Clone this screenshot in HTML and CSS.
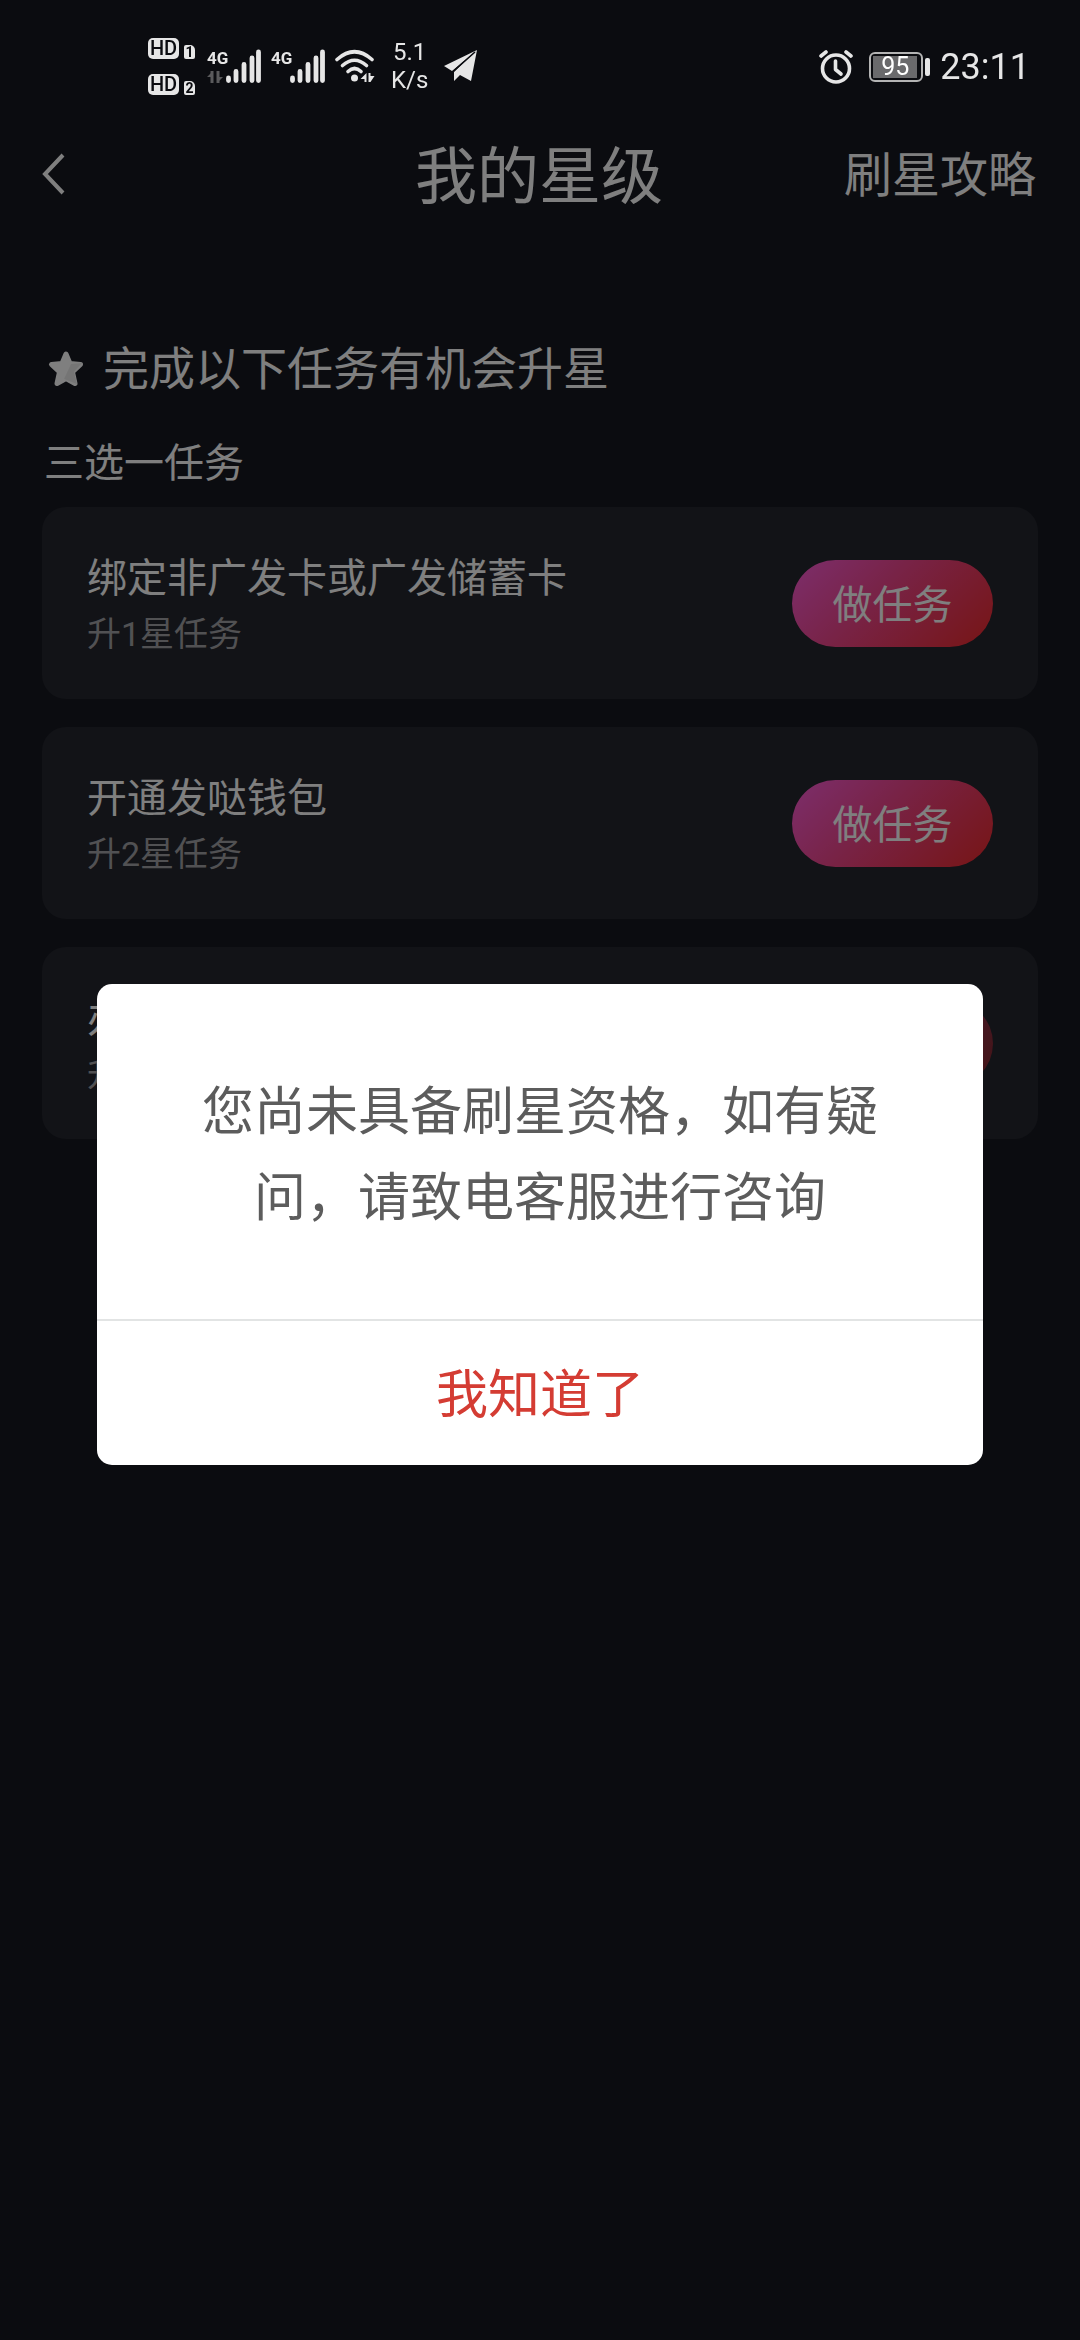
FILE: index.html
```html
<!DOCTYPE html>
<html lang="zh-CN">
<head>
<meta charset="utf-8">
<meta name="viewport" content="width=device-width">
<title>我的星级</title>
<link rel="stylesheet" href="styles.css">
</head>
<body>
<div class="status">
  <div class="status-group">
    <div class="hd-stack">
      <div class="hd-row"><span class="hd">HD</span><span class="sim">1</span></div>
      <div class="hd-row"><span class="hd">HD</span><span class="sim">2</span></div>
    </div>
    <div class="signal">
      <div class="net"><span>4G</span>
        <svg width="16" height="12" viewBox="0 0 16 12"><path d="M5 0v12M11 0v12" stroke="#5a5a5c" stroke-width="3"/><path d="M0 6l6-6v6zM16 6l-6 6V6z" fill="#5a5a5c"/></svg>
      </div>
      <svg width="35" height="34" viewBox="0 0 35 34"><path d="M2.500 29v2.500M10 22.500v9M18 15.500v16M26 9v22.500M32.500 3v28.500" stroke="#e6e6e6" stroke-width="4.800" stroke-linecap="round"/></svg>
    </div>
    <div class="signal">
      <div class="net"><span>4G</span></div>
      <svg width="35" height="34" viewBox="0 0 35 34"><path d="M2.500 29v2.500M10 22.500v9M18 15.500v16M26 9v22.500M32.500 3v28.500" stroke="#e6e6e6" stroke-width="4.800" stroke-linecap="round"/></svg>
    </div>
    <svg class="wifi" width="40" height="34" viewBox="0 0 40 34"><g fill="none" stroke="#e6e6e6" stroke-width="3.600" stroke-linecap="round"><path d="M2 10.500Q19.500-5 37 10.500"/><path d="M7.500 16.500Q19.500 6 31.500 16.500"/><path d="M13 22.500q6.500-6 13 0"/></g><circle cx="19.500" cy="29" r="3.500" fill="#e6e6e6"/><path d="M31.500 24v9h-2v-3h-4zM33.500 24h2v3h4l-4 6h-2z" fill="#e6e6e6"/></svg>
    <div class="speed"><span>5.1</span><span>K/s</span></div>
    <svg width="34" height="34" viewBox="0 0 34 34"><path d="M33 1L0 17l8 5zM33 1L10 23v9l6-6 11 6z" fill="#e6e6e6"/><path d="M31 3L9 22.500" stroke="#0b0c10" stroke-width="1.500"/></svg>
  </div>
  <div class="status-group status-right">
    <svg width="34" height="34" viewBox="0 0 34 34"><g fill="none" stroke="#e6e6e6" stroke-width="3.600" stroke-linecap="round" stroke-linejoin="round"><circle cx="17" cy="18.500" r="13.500"/><path d="M16.500 11v8.500l5.500 4.500"/><path d="M2 6l5-4M27 2l5 4"/></g></svg>
    <div class="battery"><span class="battery-body"><span class="battery-level">95</span></span><span class="battery-nub"></span></div>
    <time class="clock">23:11</time>
  </div>
</div>

<header class="bar">
  <button class="back" type="button" aria-label="返回"><svg width="24" height="42" viewBox="0 0 24 42"><path d="M21 2L3 21l18 19" fill="none" stroke="currentColor" stroke-width="4"/></svg></button>
  <h1 class="title">我的星级</h1>
  <a class="guide" href="#guide">刷星攻略</a>
</header>

<main class="content">
  <h2 class="lead"><svg width="38" height="38" viewBox="0 0 38 38"><path d="M19 4l4 9.500 10.500 1-8 7.500 2.500 11.500-9-5-9 5 2.500-11.500-8-7.500 10.500-1z" fill="currentColor" stroke="currentColor" stroke-width="5" stroke-linejoin="round"/><path d="M24 14l11-1-8 9 3 12-13-5z" fill="#000" opacity=".08"/></svg>完成以下任务有机会升星</h2>
  <h3 class="group">三选一任务</h3>
  <ul class="tasks">
    <li class="card"><div class="info"><p class="name">绑定非广发卡或广发储蓄卡</p><p class="note">升1星任务</p></div><button class="do" type="button">做任务</button></li>
    <li class="card"><div class="info"><p class="name">开通发哒钱包</p><p class="note">升2星任务</p></div><button class="do" type="button">做任务</button></li>
    <li class="card"><div class="info"><p class="name">办</p><p class="note">升</p></div><button class="do" type="button" disabled>做任务</button></li>
  </ul>
</main>

<div class="mask">
  <div class="dialog" role="dialog" aria-modal="true" aria-describedby="msg">
    <p class="message" id="msg">您尚未具备刷星资格，如有疑问，请致电客服进行咨询</p>
    <button class="confirm" type="button">我知道了</button>
  </div>
</div>
</body>
</html>
```
FILE: styles.css
```css
* {
  box-sizing: border-box;
}

body {
  margin: 0;
  min-height: 100vh;
  background: #161820;
  color: #fff;
  font-family: Roboto, "Noto Sans CJK SC", sans-serif;
}

h1, h2, h3, p, ul {
  margin: 0;
  padding: 0;
  font-weight: 400;
  list-style: none;
}

button {
  border: 0;
  padding: 0;
  background: none;
  color: inherit;
  font: inherit;
}

svg {
  display: block;
  flex: none;
}

/* System status bar, kept above the mask */
.status {
  position: relative;
  z-index: 2;
  display: flex;
  justify-content: space-between;
  align-items: center;
  height: 132px;
  padding: 0 50px 0 148px;
  color: #e6e6e6;
}

.status-group {
  display: flex;
  align-items: center;
}

.status-right {
  gap: 16px;
  padding-top: 2px;
}

.hd-stack {
  display: flex;
  flex-direction: column;
  gap: 15px;
  margin-right: 12px;
}

.hd-row {
  display: flex;
  align-items: flex-end;
  gap: 5px;
}

.hd,
.sim {
  background: #e6e6e6;
  color: #0b0c10;
  font-weight: 500;
  text-align: center;
}

.hd {
  width: 31px;
  border-radius: 5px;
  font-size: 20px;
  line-height: 21px;
}

.sim {
  width: 11px;
  border-radius: 2px 5px 2px 2px;
  font-size: 14px;
  font-weight: 700;
  line-height: 14px;
}

.signal {
  display: flex;
  margin-right: 10px;
}

.net {
  display: flex;
  flex-direction: column;
  justify-content: space-between;
  width: 18px;
  margin-right: 1px;
  font-size: 17px;
  font-weight: 700;
  line-height: 18px;
}

.wifi {
  margin-right: 16px;
}

.speed {
  display: flex;
  flex-direction: column;
  align-items: center;
  margin-right: 16px;
  font-size: 24px;
  line-height: 28px;
}

.battery {
  display: flex;
  align-items: center;
  gap: 2px;
}

.battery-body {
  width: 54px;
  padding: 2px;
  border: 2px solid #b4b4b4;
  border-radius: 6px;
}

.battery-level {
  display: block;
  width: 44px;
  background: #6a6a6c;
  color: #fff;
  font-size: 25px;
  line-height: 22px;
  text-align: center;
}

.battery-nub {
  width: 5px;
  height: 18px;
  border-radius: 2px;
  background: #e6e6e6;
}

.clock {
  margin-left: -6px;
  font-size: 36px;
  line-height: 40px;
}

.bar {
  display: grid;
  grid-template-columns: 1fr auto 1fr;
  align-items: center;
  height: 84px;
  padding: 0 44px 0 42px;
}

.back {
  justify-self: start;
}

.title {
  padding-top: 8px;
  font-size: 62px;
  line-height: 76px;
}

.guide {
  justify-self: end;
  padding-top: 4px;
  color: inherit;
  font-size: 48px;
  line-height: 72px;
  text-decoration: none;
}

.content {
  padding: 123px 42px 0;
}

.lead {
  display: flex;
  align-items: center;
  gap: 18px;
  padding-left: 5px;
  font-size: 46px;
  line-height: 60px;
}

.group {
  margin: 41px 0 19px;
  padding-left: 2px;
  font-size: 40px;
  line-height: 48px;
}

.tasks {
  display: grid;
  gap: 28px;
}

.card {
  display: flex;
  align-items: center;
  justify-content: space-between;
  height: 192px;
  padding: 0 45px;
  border-radius: 24px;
  background: #24262e;
}

.info {
  padding-top: 8px;
}

.name {
  font-size: 40px;
  line-height: 54px;
}

.note {
  color: #a2a2a6;
  font-size: 34px;
  line-height: 56px;
}

.do {
  width: 201px;
  height: 87px;
  padding-bottom: 3px;
  border-radius: 44px;
  background: linear-gradient(135deg, #f858dc 0%, #f04286 38%, #f41e1e 100%);
  background: linear-gradient(135deg, #fa5cd8 0%, #f0468c 42%, #ee2a2a 100%);
  font-size: 40px;
}

.do:disabled {
  opacity: 0.5;
}

.mask {
  position: fixed;
  inset: 0;
  z-index: 1;
  display: flex;
  align-items: center;
  justify-content: center;
  padding-top: 108px;
  background: rgba(0, 0, 0, 0.5);
}

.dialog {
  width: 82%;
  border-radius: 15px;
  overflow: hidden;
  background: #fff;
}

.message {
  padding: 86px 85px 77px;
  color: #5c5c5c;
  font-size: 52px;
  line-height: 86px;
  text-align: center;
}

.confirm {
  display: block;
  width: 100%;
  height: 146px;
  padding-bottom: 4px;
  border-top: 2px solid #e2e4e4;
  color: #d43c33;
  font-size: 52px;
}
```
